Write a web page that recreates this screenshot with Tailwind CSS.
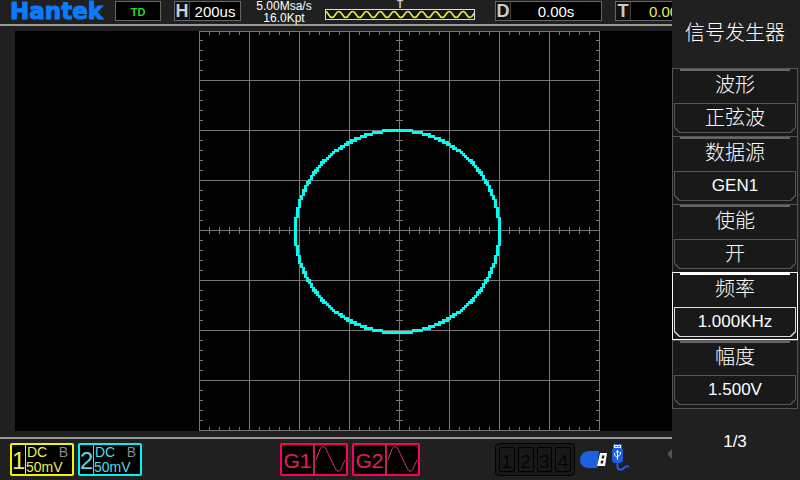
<!DOCTYPE html>
<html lang="zh-CN">

<head>
    <meta charset="UTF-8">
    <meta name="viewport" content="width=device-width, initial-scale=1.0">
    <title>Hantek</title>
    <script src="https://cdn.jsdelivr.net/npm/@tailwindcss/browser@4"></script>
</head>

<body class="bg-[#202020] text-white font-['Liberation_Sans','Noto_Sans_CJK_SC',sans-serif]">
    <div class="flex h-screen overflow-hidden">
        <main class="flex min-w-0 flex-1 flex-col overflow-hidden">
            <!-- Status bar -->
            <header class="flex h-[26px] shrink-0 items-start border-b-2 border-[#999] whitespace-nowrap">
                <h1 class="ml-[10px] w-[96px] shrink-0 font-['DejaVu_Sans',sans-serif] text-[23px] leading-[22px] font-bold text-[#0a7cff] [-webkit-text-stroke:1px_#0a7cff]">Hantek</h1>
                <div class="ml-[9px] mt-px h-5 w-[46px] shrink-0 border border-[#666] bg-black text-center text-[11px] leading-[20px] font-bold text-[#1fdc1f]">TD</div>
                <div class="ml-[13px] mt-px flex h-5 w-[67px] shrink-0 border border-[#666] bg-black text-[15px] leading-[20px]">
                    <span class="w-[15px] border-r border-[#444] bg-[#111] text-center text-[18px] leading-[18px] font-bold text-[#ccc]">H</span>
                    <span class="flex-1 text-center">200us</span>
                </div>
                <div class="ml-[11px] w-[64px] shrink-0 text-center text-[12px] leading-[12px]">
                    <p>5.00Msa/s</p>
                    <p>16.0Kpt</p>
                </div>
                <div class="ml-[9px] flex w-[150px] shrink-0 flex-col items-center">
                    <span class="h-[9px] text-[10px] leading-[9px] font-bold text-[#ccc]">T</span>
                    <svg class="h-[11px] w-full border border-[#ddd] bg-[#151515]" viewBox="0 0 148 9" fill="none" stroke="#ecec30" stroke-width="1.6">
                        <path d="M-5.9 4.5q3.45-6 6.9 0t6.9 0t6.9 0t6.9 0t6.9 0t6.9 0t6.9 0t6.9 0t6.9 0t6.9 0t6.9 0t6.9 0t6.9 0t6.9 0t6.9 0t6.9 0t6.9 0t6.9 0t6.9 0t6.9 0t6.9 0t6.9 0t6.9 0" transform="translate(1.5 0)" />
                    </svg>
                </div>
                <div class="ml-5 mt-px flex h-5 w-[107px] shrink-0 border border-[#666] bg-black text-[15px] leading-[20px]">
                    <span class="w-[15px] border-r border-[#444] bg-[#111] text-center text-[18px] leading-[18px] font-bold text-[#ccc]">D</span>
                    <span class="flex-1 text-center">0.00s</span>
                </div>
                <div class="ml-[13px] mt-px flex h-5 w-[107px] shrink-0 border border-[#666] bg-black text-[15px] leading-[20px]">
                    <span class="w-[15px] border-r border-[#444] bg-[#111] text-center text-[18px] leading-[18px] font-bold text-[#ccc]">T</span>
                    <span class="flex-1 pl-[18px] text-[#ecec50]">0.00uV</span>
                </div>
            </header>

            <!-- Screen -->
            <section class="mt-[5px] mb-[6px] ml-[15px] min-h-0 flex-1 bg-black pl-[184px]">
                <svg class="h-[400px] w-[401px]" viewBox="0 0 401 400" fill="none" shape-rendering="crispEdges">
                    <g stroke="#777">
                        <path d="M.5 0V400M50.5 0V400M100.5 0V400M150.5 0V400M200.5 0V400M250.5 0V400M300.5 0V400M350.5 0V400M400.5 0V400" />
                        <path d="M0 .5H401M0 49.5H401M0 99.5H401M0 149.5H401M0 199.5H401M0 249.5H401M0 299.5H401M0 349.5H401M0 399.5H401" />
                        <!-- ticks along x -->
                        <path stroke-dasharray="1 9" stroke-width="4" d="M0 2H401M0 398H401" />
                        <path stroke-dasharray="1 9" stroke-width="7" d="M0 199.5H401" />
                        <!-- ticks along y -->
                        <path stroke-dasharray="1 9" stroke-width="4" d="M2 9V400M399 9V400" />
                        <path stroke-dasharray="1 9" stroke-width="7" d="M200.5 9V400" />
                    </g>
                    <path id="trace" fill="#00fff0" />
                </svg>
            </section>

            <!-- Channel bar -->
            <footer class="flex h-[43px] shrink-0 items-start border-t-2 border-[#999] pt-1 pl-[10px] whitespace-nowrap">
                <button class="flex h-[33px] w-16 shrink-0 rounded-xs border-2 border-[#f4f400] bg-black text-left text-[14px] leading-[15px] text-[#ecec50]">
                    <span class="h-full w-[14px] border-r border-[#f4f400] text-center text-[24px] leading-[32px]">1</span>
                    <span class="flex-1">
                        <span class="flex justify-between pr-1 pl-px"><span>DC</span><span class="text-[#888]">B</span></span>
                        <span class="block">50mV</span>
                    </span>
                </button>
                <button class="ml-1 flex h-[33px] w-16 shrink-0 rounded-xs border-2 border-[#00f4f4] bg-black text-left text-[14px] leading-[15px] text-[#50dce6]">
                    <span class="h-full w-[14px] border-r border-[#00f4f4] text-center text-[24px] leading-[32px]">2</span>
                    <span class="flex-1">
                        <span class="flex justify-between pr-1 pl-px"><span>DC</span><span class="text-[#888]">B</span></span>
                        <span class="block">50mV</span>
                    </span>
                </button>
                <button class="ml-[138px] flex h-[33px] w-[68px] shrink-0 rounded-xs border-2 border-[#ff0060] bg-black text-[#e61e5a]">
                    <span class="h-full w-[33px] border-r-2 border-[#b8245a] text-center text-[21px] leading-[31px]">G1</span>
                    <svg class="h-[29px] flex-1" viewBox="0 0 31 29" fill="none" stroke="#e0305a">
                        <path d="M1 15L5 4Q8-1 11 4L20 23Q23 29 26 24L30 15" />
                    </svg>
                </button>
                <button class="ml-1 flex h-[33px] w-[68px] shrink-0 rounded-xs border-2 border-[#ff0060] bg-black text-[#e61e5a]">
                    <span class="h-full w-[33px] border-r-2 border-[#b8245a] text-center text-[21px] leading-[31px]">G2</span>
                    <svg class="h-[29px] flex-1" viewBox="0 0 31 29" fill="none" stroke="#e0305a">
                        <path d="M1 15L5 4Q8-1 11 4L20 23Q23 29 26 24L30 15" />
                    </svg>
                </button>
                <div class="ml-[75px] flex h-[33px] w-20 shrink-0 gap-[3px] rounded-sm border border-black bg-[#181818] p-[3px] text-center text-[19px] leading-[27px] text-[#050505]">
                    <span class="flex-1 rounded-xs border border-black">1</span>
                    <span class="flex-1 rounded-xs border border-black">2</span>
                    <span class="flex-1 rounded-xs border border-black">3</span>
                    <span class="flex-1 rounded-xs border border-black">4</span>
                </div>
                <svg class="ml-[5px] h-[30px] w-[51px] shrink-0" viewBox="0 0 51 30">
                    <!-- usb stick -->
                    <path fill="#1e5fe0" d="M8 8H19L17 25H8Q0 24 0 17Q0 10 8 8Z" />
                    <path fill="#fff" d="M20 10H27L25 23H17Z" />
                    <path fill="#202020" d="M22 12.500H24.500L24 15.500H21.500ZM21 17.500H23.500L23 20.500H20.500Z" />
                    <!-- usb cable -->
                    <path fill="#1e5fe0" d="M33 1H42V6H43V18L41 20H34L32 18V6H33Z" />
                    <path fill="#fff" d="M34 2H41V5H34Z" />
                    <path fill="#1e5fe0" d="M35 3H37V4H35ZM38 3H40V4H38Z" />
                    <path fill="none" stroke="#fff" d="M37.500 8V17M34.500 10V12L37.500 15M40.500 9V11L37.500 14M36 9.500L37.500 7.500L39 9.500" />
                    <path fill="none" stroke="#1e5fe0" stroke-width="2" d="M37.500 20V24Q38 28 43 26Q46 22 49 24" />
                </svg>
                <button class="mt-[6px] mr-0 ml-auto shrink-0" aria-label="More">
                    <svg class="h-[10px] w-1" viewBox="0 0 4 10" fill="#555">
                        <path d="M4 0V10L0 6V4Z" />
                    </svg>
                </button>
            </footer>
        </main>

        <!-- Signal generator menu -->
        <aside class="flex w-32 shrink-0 flex-col pr-[2px] text-center text-[17px]">
            <h2 class="h-[68px] text-[20px] leading-[66px] font-light whitespace-nowrap">信号发生器</h2>
            <div class="flex h-[68px] flex-col border-x border-t border-[#555] bg-[#191919] px-px">
                <div class="mx-[6px] h-[2px] bg-[#666]"></div>
                <label for="wave" class="h-8 text-[20px] leading-[28px] font-light">波形</label>
                <button id="wave" class="h-[30px] bg-[#555] p-px [clip-path:polygon(0_0,100%_0,100%_calc(100%-5px),calc(100%-5px)_100%,5px_100%,0_calc(100%-5px))]">
                    <span class="block h-full bg-[#191919] text-[20px] leading-[28px] font-light [clip-path:polygon(0_0,100%_0,100%_calc(100%-5px),calc(100%-5px)_100%,5px_100%,0_calc(100%-5px))]">正弦波</span>
                </button>
            </div>
            <div class="flex h-[68px] flex-col border-x border-t border-[#555] bg-[#191919] px-px">
                <div class="mx-[6px] h-[2px] bg-[#666]"></div>
                <label for="source" class="h-8 text-[20px] leading-[28px] font-light">数据源</label>
                <button id="source" class="h-[30px] bg-[#555] p-px [clip-path:polygon(0_0,100%_0,100%_calc(100%-5px),calc(100%-5px)_100%,5px_100%,0_calc(100%-5px))]">
                    <span class="block h-full bg-[#191919] leading-[28px] [clip-path:polygon(0_0,100%_0,100%_calc(100%-5px),calc(100%-5px)_100%,5px_100%,0_calc(100%-5px))]">GEN1</span>
                </button>
            </div>
            <div class="flex h-[68px] flex-col border-x border-t border-[#555] bg-[#191919] px-px">
                <div class="mx-[6px] h-[2px] bg-[#666]"></div>
                <label for="enable" class="h-8 text-[20px] leading-[28px] font-light">使能</label>
                <button id="enable" class="h-[30px] bg-[#555] p-px [clip-path:polygon(0_0,100%_0,100%_calc(100%-5px),calc(100%-5px)_100%,5px_100%,0_calc(100%-5px))]">
                    <span class="block h-full bg-[#191919] text-[20px] leading-[28px] font-light [clip-path:polygon(0_0,100%_0,100%_calc(100%-5px),calc(100%-5px)_100%,5px_100%,0_calc(100%-5px))]">开</span>
                </button>
            </div>
            <!-- selected -->
            <div class="flex h-[68px] flex-col border border-white bg-[#191919] px-px">
                <div class="mx-[6px] h-[2px] shrink-0 bg-white"></div>
                <label for="freq" class="h-8 text-[20px] leading-[28px] font-light">频率</label>
                <button id="freq" class="h-[30px] bg-[#ddd] p-px [clip-path:polygon(0_0,100%_0,100%_calc(100%-5px),calc(100%-5px)_100%,5px_100%,0_calc(100%-5px))]">
                    <span class="block h-full bg-[#191919] leading-[28px] [clip-path:polygon(0_0,100%_0,100%_calc(100%-5px),calc(100%-5px)_100%,5px_100%,0_calc(100%-5px))]">1.000KHz</span>
                </button>
            </div>
            <div class="flex h-[69px] flex-col border border-[#555] bg-[#191919] px-px">
                <div class="mx-[6px] h-[2px] bg-[#666]"></div>
                <label for="amp" class="h-8 text-[20px] leading-[28px] font-light">幅度</label>
                <button id="amp" class="h-[30px] bg-[#555] p-px [clip-path:polygon(0_0,100%_0,100%_calc(100%-5px),calc(100%-5px)_100%,5px_100%,0_calc(100%-5px))]">
                    <span class="block h-full bg-[#191919] leading-[28px] [clip-path:polygon(0_0,100%_0,100%_calc(100%-5px),calc(100%-5px)_100%,5px_100%,0_calc(100%-5px))]">1.500V</span>
                </button>
            </div>
            <div class="flex flex-1 items-center justify-center pb-[6px]">1/3</div>
        </aside>
    </div>

    <script>
        // XY trace, plotted on a 2px raster
        const trace = document.getElementById('trace');
        let d = '';

        for (let i = 0; i < 500; i++) {
            const angle = i / 500 * 2 * Math.PI;
            const x = Math.round((196 + 102 * Math.cos(angle)) / 2) * 2 + 1;
            const y = Math.round((199 + 101 * Math.sin(angle)) / 2) * 2;
            d += `M${x} ${y}h3v3h-3z`;
        }

        trace.setAttribute('d', d);
    </script>
</body>

</html>
